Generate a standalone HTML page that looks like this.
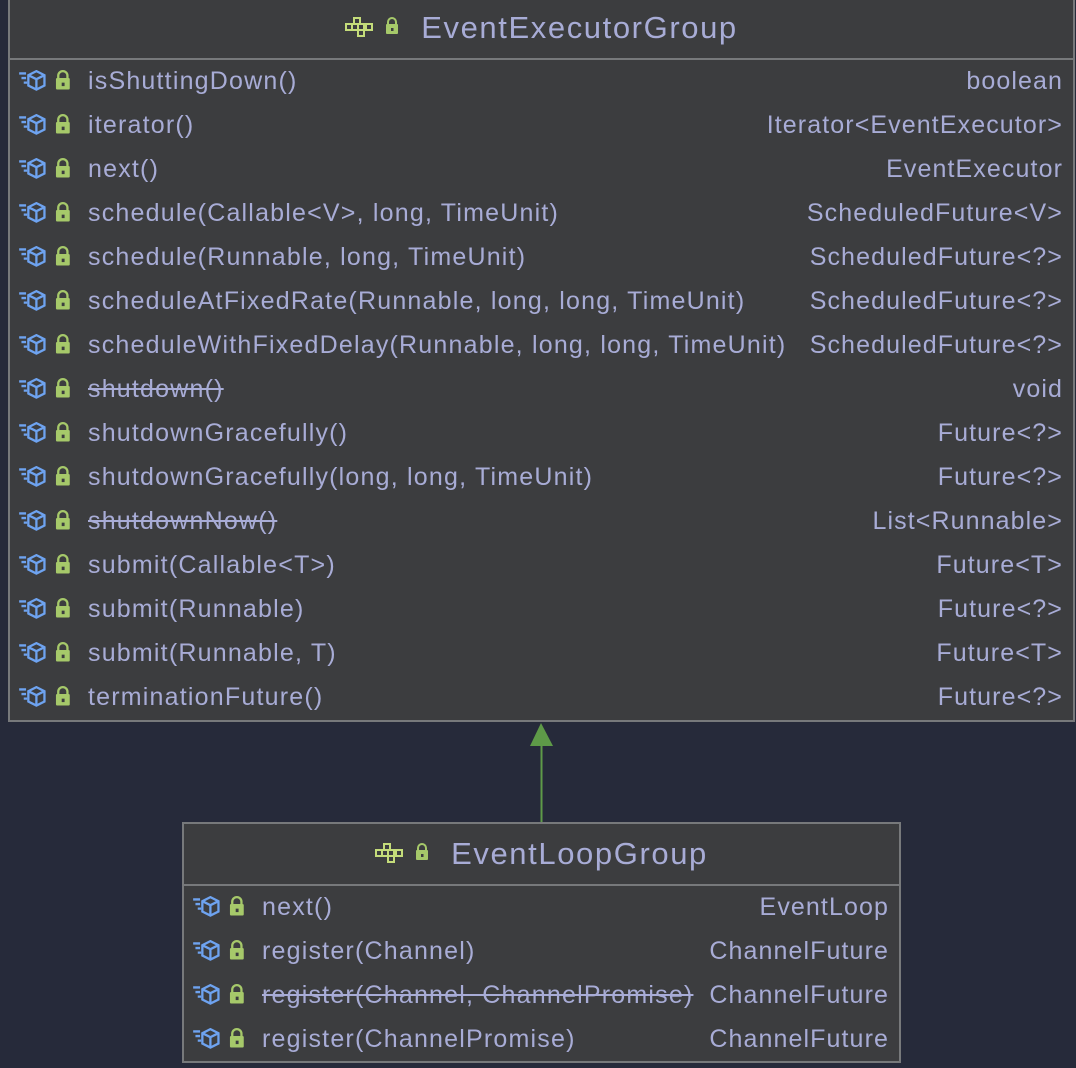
<!DOCTYPE html>
<html><head><meta charset="utf-8"><style>
body{margin:0;width:1076px;height:1068px;background:#262a3a;position:relative;overflow:hidden;font-family:"Liberation Sans",sans-serif;color:#a8acd6}
.box{position:absolute;background:#3c3d3f;border:2px solid #77797b;box-sizing:border-box}
.hdr{position:absolute;left:0;right:0;top:0;border-bottom:2px solid #77797b;display:flex;align-items:center;justify-content:center;font-size:31px;letter-spacing:1.6px}
.row{position:absolute;left:0;right:0;height:44px;font-size:25px;line-height:41px;letter-spacing:1.2px}
.row .n{position:absolute;left:78px;white-space:nowrap}
.row .t{position:absolute;right:10px;white-space:nowrap;letter-spacing:1.1px}
.row svg{position:absolute;left:8px;top:9px}
s{text-decoration:line-through}
</style></head><body>
<svg width="0" height="0" style="position:absolute"><defs>
<g id="mi"><g transform="scale(1.15)"><g stroke="#6ea3f0" stroke-width="2" fill="none"><path d="M1 3h6M3 7h4M5 11h3"/><path d="M16 1l7 3.5v9L16 17l-7-3.5v-9z M9 4.5l7 3.5 7-3.5 M16 8v9"/></g>
<g transform="translate(32,0)"><path d="M3 8V5a4 4 0 0 1 8 0V8" stroke="#a6c96a" stroke-width="2" fill="none"/><rect x="1" y="7" width="12" height="10" rx="1" fill="#a6c96a"/><rect x="6" y="11" width="2.5" height="3" fill="#3c3d3f"/></g></g></g>
<g id="ci"><g fill="none" stroke="#c4dc7a" stroke-width="2"><rect x="9" y="1" width="6" height="6"/><rect x="1" y="7" width="6" height="6"/><rect x="7" y="7" width="6" height="6"/><rect x="13" y="7" width="6" height="6"/><rect x="21" y="7" width="6" height="6"/><rect x="13" y="13" width="6" height="6"/></g>
<g transform="translate(40,0)"><path d="M3 8V5a4 4 0 0 1 8 0V8" stroke="#a6c96a" stroke-width="2" fill="none"/><rect x="1" y="7" width="12" height="10" rx="1" fill="#a6c96a"/><rect x="6" y="11" width="2.5" height="3" fill="#3c3d3f"/></g></g>
</defs></svg>

<div class="box" style="left:8px;top:-4px;width:1067px;height:726px">
 <div class="hdr" style="height:60px"><svg width="56" height="22" style="margin-right:20px"><use href="#ci"/></svg>EventExecutorGroup</div>
 <div class="row" style="top:63px"><svg width="64" height="24"><use href="#mi"/></svg><span class="n">isShuttingDown()</span><span class="t">boolean</span></div>
 <div class="row" style="top:107px"><svg width="64" height="24"><use href="#mi"/></svg><span class="n">iterator()</span><span class="t">Iterator&lt;EventExecutor&gt;</span></div>
 <div class="row" style="top:151px"><svg width="64" height="24"><use href="#mi"/></svg><span class="n">next()</span><span class="t">EventExecutor</span></div>
 <div class="row" style="top:195px"><svg width="64" height="24"><use href="#mi"/></svg><span class="n">schedule(Callable&lt;V&gt;, long, TimeUnit)</span><span class="t">ScheduledFuture&lt;V&gt;</span></div>
 <div class="row" style="top:239px"><svg width="64" height="24"><use href="#mi"/></svg><span class="n">schedule(Runnable, long, TimeUnit)</span><span class="t">ScheduledFuture&lt;?&gt;</span></div>
 <div class="row" style="top:283px"><svg width="64" height="24"><use href="#mi"/></svg><span class="n">scheduleAtFixedRate(Runnable, long, long, TimeUnit)</span><span class="t">ScheduledFuture&lt;?&gt;</span></div>
 <div class="row" style="top:327px"><svg width="64" height="24"><use href="#mi"/></svg><span class="n">scheduleWithFixedDelay(Runnable, long, long, TimeUnit)</span><span class="t">ScheduledFuture&lt;?&gt;</span></div>
 <div class="row" style="top:371px"><svg width="64" height="24"><use href="#mi"/></svg><span class="n"><s>shutdown()</s></span><span class="t">void</span></div>
 <div class="row" style="top:415px"><svg width="64" height="24"><use href="#mi"/></svg><span class="n">shutdownGracefully()</span><span class="t">Future&lt;?&gt;</span></div>
 <div class="row" style="top:459px"><svg width="64" height="24"><use href="#mi"/></svg><span class="n">shutdownGracefully(long, long, TimeUnit)</span><span class="t">Future&lt;?&gt;</span></div>
 <div class="row" style="top:503px"><svg width="64" height="24"><use href="#mi"/></svg><span class="n"><s>shutdownNow()</s></span><span class="t">List&lt;Runnable&gt;</span></div>
 <div class="row" style="top:547px"><svg width="64" height="24"><use href="#mi"/></svg><span class="n">submit(Callable&lt;T&gt;)</span><span class="t">Future&lt;T&gt;</span></div>
 <div class="row" style="top:591px"><svg width="64" height="24"><use href="#mi"/></svg><span class="n">submit(Runnable)</span><span class="t">Future&lt;?&gt;</span></div>
 <div class="row" style="top:635px"><svg width="64" height="24"><use href="#mi"/></svg><span class="n">submit(Runnable, T)</span><span class="t">Future&lt;T&gt;</span></div>
 <div class="row" style="top:679px"><svg width="64" height="24"><use href="#mi"/></svg><span class="n">terminationFuture()</span><span class="t">Future&lt;?&gt;</span></div>
</div>

<svg style="position:absolute;left:520px;top:720px" width="44" height="106"><path d="M21 3L10 26h23z" fill="#5e9a48"/><path d="M21.5 24V104" stroke="#5e9a48" stroke-width="2"/></svg>

<div class="box" style="left:182px;top:822px;width:719px;height:241px">
 <div class="hdr" style="height:60px"><svg width="56" height="22" style="margin-right:20px"><use href="#ci"/></svg>EventLoopGroup</div>
 <div class="row" style="top:63px"><svg width="64" height="24"><use href="#mi"/></svg><span class="n">next()</span><span class="t">EventLoop</span></div>
 <div class="row" style="top:107px"><svg width="64" height="24"><use href="#mi"/></svg><span class="n">register(Channel)</span><span class="t">ChannelFuture</span></div>
 <div class="row" style="top:151px"><svg width="64" height="24"><use href="#mi"/></svg><span class="n"><s>register(Channel, ChannelPromise)</s></span><span class="t">ChannelFuture</span></div>
 <div class="row" style="top:195px"><svg width="64" height="24"><use href="#mi"/></svg><span class="n">register(ChannelPromise)</span><span class="t">ChannelFuture</span></div>
</div>
</body></html>
